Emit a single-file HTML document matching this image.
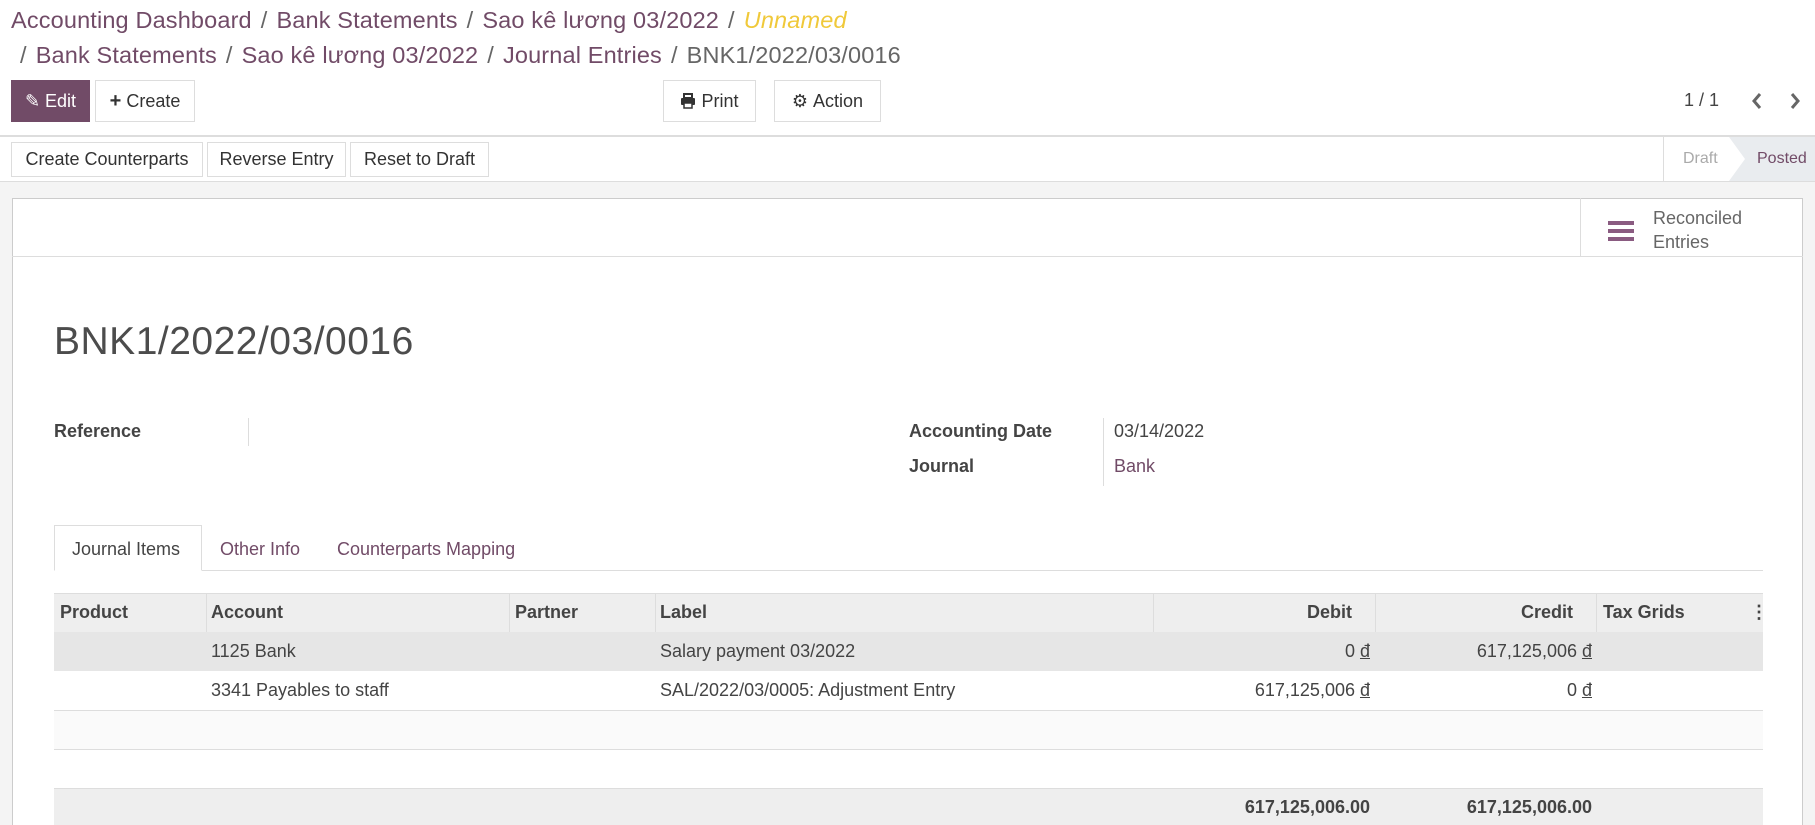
<!DOCTYPE html>
<html style="width:1815px;height:825px;overflow:hidden"><head><meta charset="utf-8"><style>
*{box-sizing:border-box;margin:0;padding:0}
body{width:1815px;height:825px;overflow:hidden;background:#fff;font-family:"Liberation Sans",sans-serif;color:#4c4c4c;position:relative;font-size:18px}
.a{position:absolute;white-space:nowrap}
.p{color:#714b67}
.bc{font-size:23.5px;color:#714b67;letter-spacing:0.15px}
.bc .s{color:#666;margin:0 9px}
.btn{position:absolute;border:1px solid #ddd;background:#fff;color:#333;font-size:18px;display:flex;align-items:center;justify-content:center}
.th{position:absolute;top:593px;height:39px;line-height:39px;font-weight:bold;color:#444;font-size:18px}
.td{position:absolute;line-height:39px;font-size:18px;color:#444}
.vl{position:absolute;top:593px;height:39px;width:1px;background:#ddd}
</style></head><body>
<div class="a bc" style="left:11px;top:7px">Accounting Dashboard<span class="s">/</span>Bank Statements<span class="s">/</span>Sao kê lương 03/2022<span class="s">/</span><i style="color:#f0c93a">Unnamed</i></div>
<div class="a bc" style="left:11px;top:42px"><span class="s">/</span>Bank Statements<span class="s">/</span>Sao kê lương 03/2022<span class="s">/</span>Journal Entries<span class="s">/</span><span style="color:#666">BNK1/2022/03/0016</span></div>

<div class="btn" style="left:11px;top:80px;width:79px;height:42px;background:#714b67;border-color:#714b67;color:#fff">✎&nbsp;Edit</div>
<div class="btn" style="left:95px;top:80px;width:100px;height:42px"><b style="font-size:20px">+</b>&nbsp;Create</div>
<div class="btn" style="left:663px;top:80px;width:93px;height:42px"><svg width="16" height="16" viewBox="0 0 16 16"><rect x="4" y="1" width="8" height="4" fill="none" stroke="#333" stroke-width="2"/><rect x="1" y="5" width="14" height="7" rx="1" fill="#333"/><rect x="4" y="10" width="8" height="5" fill="#fff" stroke="#333" stroke-width="1.5"/></svg>&nbsp;Print</div>
<div class="btn" style="left:774px;top:80px;width:107px;height:42px">⚙&nbsp;Action</div>
<div class="a" style="left:1684px;top:90px;font-size:18px;color:#444">1 / 1</div>
<svg class="a" style="left:1750px;top:92px" width="14" height="18"><path d="M10 2 L4 9 L10 16" fill="none" stroke="#666" stroke-width="3"/></svg>
<svg class="a" style="left:1788px;top:92px" width="14" height="18"><path d="M4 2 L10 9 L4 16" fill="none" stroke="#666" stroke-width="3"/></svg>

<div class="a" style="left:0;top:135px;width:1815px;height:2px;background:#ddd"></div>
<div class="btn" style="left:11px;top:142px;width:192px;height:35px">Create Counterparts</div>
<div class="btn" style="left:207px;top:142px;width:139px;height:35px">Reverse Entry</div>
<div class="btn" style="left:350px;top:142px;width:139px;height:35px">Reset to Draft</div>
<div class="a" style="left:1663px;top:137px;width:1px;height:44px;background:#ddd"></div>
<div class="a" style="left:1683px;top:150px;font-size:16px;color:#aaa">Draft</div>
<svg class="a" style="left:1729px;top:137px" width="86" height="44"><polygon points="0,0 86,0 86,44 0,44 16,22" fill="#e9ecef"/></svg>
<div class="a" style="left:1757px;top:150px;font-size:16px;color:#714b67">Posted</div>

<div class="a" style="left:0;top:181px;width:1815px;height:644px;background:#f4f4f4;border-top:1px solid #ddd"></div>
<div class="a" style="left:12px;top:198px;width:1791px;height:627px;background:#fff;border:1px solid #ccc;border-bottom:none"></div>
<div class="a" style="left:12px;top:256px;width:1791px;height:1px;background:#ddd"></div>
<div class="a" style="left:1580px;top:198px;width:1px;height:58px;background:#ddd"></div>
<div class="a" style="left:1608px;top:221px;width:26px;height:4px;background:#8a5b81;box-shadow:0 8px 0 #8a5b81,0 16px 0 #8a5b81"></div>
<div class="a" style="left:1653px;top:206px;font-size:18px;color:#666;line-height:24px">Reconciled<br>Entries</div>

<div class="a" style="left:54px;top:320px;font-size:39px;color:#4c4c4c;letter-spacing:0.5px">BNK1/2022/03/0016</div>
<div class="a" style="left:54px;top:421px;font-weight:bold;color:#444">Reference</div>
<div class="a" style="left:248px;top:418px;width:1px;height:28px;background:#ddd"></div>
<div class="a" style="left:909px;top:421px;font-weight:bold;color:#444">Accounting Date</div>
<div class="a" style="left:909px;top:456px;font-weight:bold;color:#444">Journal</div>
<div class="a" style="left:1103px;top:418px;width:1px;height:68px;background:#ddd"></div>
<div class="a" style="left:1114px;top:421px;color:#444">03/14/2022</div>
<div class="a p" style="left:1114px;top:456px">Bank</div>

<div class="a" style="left:54px;top:570px;width:1709px;height:1px;background:#ddd"></div>
<div class="a" style="left:54px;top:525px;width:148px;height:46px;border:1px solid #ddd;border-bottom-color:#fff;background:#fff"></div>
<div class="a" style="left:72px;top:539px;color:#444">Journal Items</div>
<div class="a p" style="left:220px;top:539px">Other Info</div>
<div class="a p" style="left:337px;top:539px">Counterparts Mapping</div>

<div class="a" style="left:54px;top:593px;width:1709px;height:39px;background:#eee;border-top:1px solid #ddd"></div>
<div class="a" style="left:54px;top:632px;width:1709px;height:39px;background:#e6e6e6"></div>
<div class="a" style="left:54px;top:710px;width:1709px;height:1px;background:#ddd"></div>
<div class="a" style="left:54px;top:711px;width:1709px;height:38px;background:#fafafa"></div>
<div class="a" style="left:54px;top:749px;width:1709px;height:1px;background:#ddd"></div>
<div class="a" style="left:54px;top:788px;width:1709px;height:37px;background:#eee;border-top:1px solid #ddd"></div>
<div class="vl" style="left:206px"></div><div class="vl" style="left:509px"></div><div class="vl" style="left:655px"></div><div class="vl" style="left:1153px"></div><div class="vl" style="left:1375px"></div><div class="vl" style="left:1596px"></div>
<div class="th" style="left:60px">Product</div>
<div class="th" style="left:211px">Account</div>
<div class="th" style="left:515px">Partner</div>
<div class="th" style="left:660px">Label</div>
<div class="th" style="right:463px">Debit</div>
<div class="th" style="right:242px">Credit</div>
<div class="th" style="left:1603px">Tax Grids</div>
<div class="th" style="left:1750px">⋮</div>
<div class="td" style="left:211px;top:632px">1125 Bank</div>
<div class="td" style="left:660px;top:632px">Salary payment 03/2022</div>
<div class="td" style="right:445px;top:632px">0 <u>đ</u></div>
<div class="td" style="right:223px;top:632px">617,125,006 <u>đ</u></div>
<div class="td" style="left:211px;top:671px">3341 Payables to staff</div>
<div class="td" style="left:660px;top:671px">SAL/2022/03/0005: Adjustment Entry</div>
<div class="td" style="right:445px;top:671px">617,125,006 <u>đ</u></div>
<div class="td" style="right:223px;top:671px">0 <u>đ</u></div>
<div class="td" style="right:445px;top:788px;font-weight:bold">617,125,006.00</div>
<div class="td" style="right:223px;top:788px;font-weight:bold">617,125,006.00</div>
</body></html>
